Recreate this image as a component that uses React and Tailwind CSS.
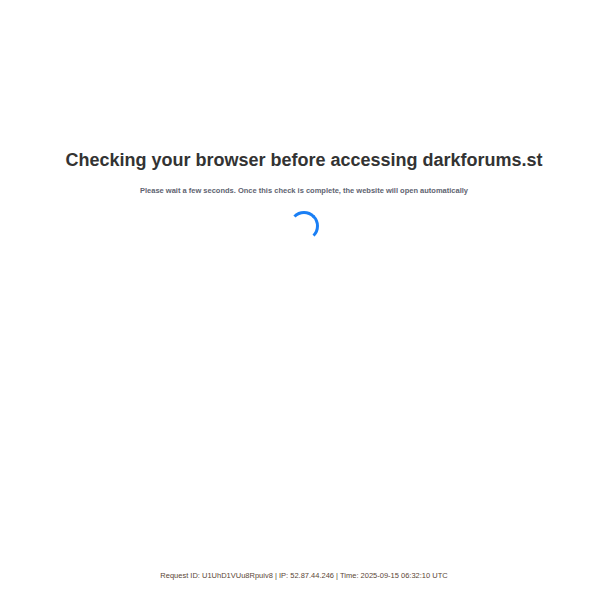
import React from "react";

const App = () => {
  return (
    <div className="min-h-screen bg-white flex flex-col pl-[8px] font-['Liberation_Sans',Arial,sans-serif]">

      {/* MAIN */}

      <div className="flex-1 flex flex-col items-center pt-[149px]">

        <h1 className="text-[18px] font-bold text-[#333333] leading-[22px]">
          Checking your browser before accessing darkforums.st
        </h1>

        <p className="mt-[15px] text-[7.5px] font-bold text-[#5e6370] leading-[10px]">
          Please wait a few seconds. Once this check is complete, the website will open automatically
        </p>

        <div className="mt-[15px] w-[30px] h-[30px] rounded-full border-[3px] border-transparent border-t-[#1a7ff5] border-r-[#1a7ff5]" />

      </div>

      {/* FOOTER */}

      <footer className="pb-[19px] text-center text-[7.5px] text-[#5b4636] leading-[10px]">
        Request ID: U1UhD1VUu8Rpuiv8 | IP: 52.87.44.246 | Time: 2025-09-15 06:32:10 UTC
      </footer>

    </div>
  );
};

export default App;
